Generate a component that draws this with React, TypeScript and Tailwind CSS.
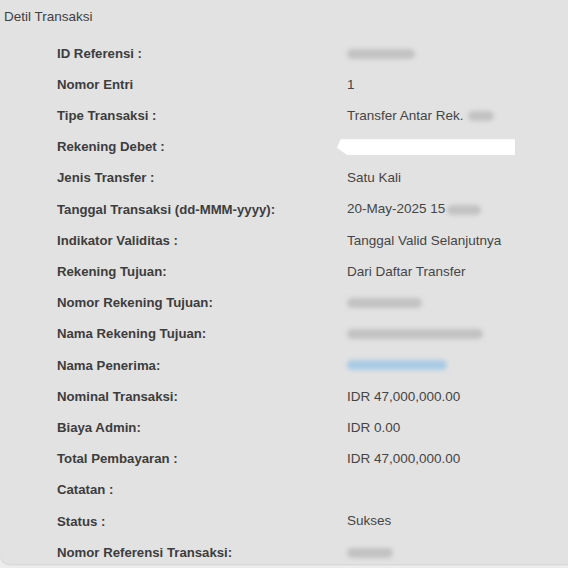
import React from 'react'

type Row = {
  label: string
  value?: React.ReactNode
}

function Blur({ w, color = 'bg-[#c2c2c2]' }: { w: string; color?: string }) {
  return <span className={`inline-block h-[10px] rounded-full blur-[2px] ${w} ${color}`} />
}

const rows: Row[] = [
  { label: 'ID Referensi :', value: <Blur w="w-[68px]" /> },
  { label: 'Nomor Entri', value: '1' },
  {
    label: 'Tipe Transaksi :',
    value: (
      <span className="flex items-center gap-[4px]">
        Transfer Antar Rek.
        <Blur w="w-[26px]" />
      </span>
    ),
  },
  {
    label: 'Rekening Debet :',
    value: (
      <span className="-ml-[10px] block h-[16px] w-[178px] bg-white [clip-path:polygon(2%_0,100%_0,100%_100%,6%_100%,0_55%)]" />
    ),
  },
  { label: 'Jenis Transfer :', value: 'Satu Kali' },
  {
    label: 'Tanggal Transaksi (dd-MMM-yyyy):',
    value: (
      <span className="flex items-center gap-[2px]">
        20-May-2025 15
        <Blur w="w-[34px]" />
      </span>
    ),
  },
  { label: 'Indikator Validitas :', value: 'Tanggal Valid Selanjutnya' },
  { label: 'Rekening Tujuan:', value: 'Dari Daftar Transfer' },
  { label: 'Nomor Rekening Tujuan:', value: <Blur w="w-[75px]" /> },
  { label: 'Nama Rekening Tujuan:', value: <Blur w="w-[136px]" /> },
  { label: 'Nama Penerima:', value: <Blur w="w-[100px]" color="bg-[#a9cbe4]" /> },
  { label: 'Nominal Transaksi:', value: 'IDR 47,000,000.00' },
  { label: 'Biaya Admin:', value: 'IDR 0.00' },
  { label: 'Total Pembayaran :', value: 'IDR 47,000,000.00' },
  { label: 'Catatan :' },
  { label: 'Status :', value: 'Sukses' },
  { label: 'Nomor Referensi Transaksi:', value: <Blur w="w-[46px]" /> },
]

export default function App() {
  return (
    <div className="h-[568px] w-[568px] overflow-hidden bg-[#ededed] font-['Liberation_Sans',Arial,sans-serif]">
      <div className="h-[564px] rounded-bl-[10px] bg-[#e2e2e2] shadow-[0_1px_2px_rgba(0,0,0,0.12)]">
        <div className="h-[38px] pl-[4px] pt-[9px] text-[13.5px] leading-4 text-[#3f3f3f]">
          Detil Transaksi
        </div>
        <div className="flex flex-col">
          {rows.map((row) => (
            <div key={row.label} className="flex h-[31.2px] items-center">
              <div className="w-[347px] pl-[57px] text-[13.2px] font-bold text-[#3d3d3d]">
                {row.label}
              </div>
              <div className="flex items-center text-[13.5px] text-[#454545]">{row.value}</div>
            </div>
          ))}
        </div>
      </div>
    </div>
  )
}
